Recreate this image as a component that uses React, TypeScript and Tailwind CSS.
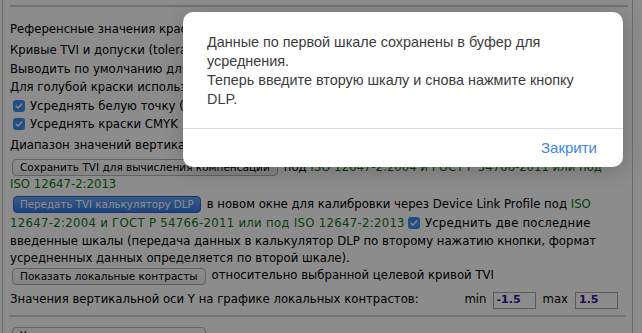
import type { ReactNode } from "react";

function Check() {
  return (
    <span className="mr-[5px] inline-flex h-[12px] w-[12px] shrink-0 items-center justify-center rounded-[3px] bg-[#3d8ef0] align-[-1px]">
      <svg viewBox="0 0 12 12" className="h-[10px] w-[10px]">
        <path d="M2.6 6.2l2.2 2.2 4.6-4.8" fill="none" stroke="white" strokeWidth="1.7" strokeLinecap="round" strokeLinejoin="round" />
      </svg>
    </span>
  );
}

function Btn({ children }: { children: ReactNode }) {
  return (
    <span className="inline-flex h-[17px] shrink-0 items-center whitespace-nowrap rounded-[4px] border border-[#b5b5b5] bg-gradient-to-b from-white to-[#f0f0f0] px-[7px] text-[10.5px] leading-none">
      {children}
    </span>
  );
}

const Iso = ({ children }: { children: ReactNode }) => <span className="text-[#0c7a0c]">{children}</span>;

export default function App() {
  return (
    <div className="relative h-[333px] w-[642px] overflow-hidden bg-white font-['DejaVu_Sans',sans-serif] text-[11.7px] text-black">
      <div className="ml-[2px] h-full w-[631px] whitespace-nowrap border-x border-[#c4c4c4] pl-[7px] pr-[4px]">
        <div className="pt-[5px]">
          <div className="border-t-2 border-[#d0d0d0]" />
        </div>
        <div className="mt-[13px] h-[18px] leading-[18px]">Референсные значения красок</div>
        <div className="mt-[3px] leading-[18.5px]">
          <div>Кривые TVI и допуски (tolerance)</div>
          <div>Выводить по умолчанию для</div>
          <div>Для голубой краски использовать</div>
          <div className="flex items-center pl-[3px]">
            <Check />
            Усреднять белую точку (Paper)
          </div>
          <div className="flex items-center pl-[3px]">
            <Check />
            Усреднять краски CMYK
          </div>
        </div>
        <div className="mt-[2.5px] h-[18px] leading-[18px]">Диапазон значений вертикальной оси</div>
        <div className="mt-[5px] flex h-[17px] items-center gap-[6px] pl-[2px]">
          <Btn>Сохранить TVI для вычисления компенсации</Btn>
          <span>
            под <Iso>ISO 12647-2:2004 и ГОСТ Р 54766-2011 или под</Iso>
          </span>
        </div>
        <div className="h-[16px] leading-[16px]">
          <Iso>ISO 12647-2:2013</Iso>
        </div>
        <div className="mt-[4px] flex h-[17px] items-center gap-[6px] pl-[3px]">
          <span className="inline-flex h-[17px] shrink-0 items-center rounded-[4px] border border-[#2d64c8] bg-gradient-to-b from-[#6aa6f8] to-[#2f7ae6] px-[6px] text-[10.3px] leading-none text-white">
            Передать TVI калькулятору DLP
          </span>
          <span>
            в новом окне для калибровки через Device Link Profile под <Iso>ISO</Iso>
          </span>
        </div>
        <div className="mt-[2px] flex h-[18px] items-center">
          <span className="tracking-[0.3px] text-[#0c7a0c]">12647-2:2004 и ГОСТ Р 54766-2011 или под ISO 12647-2:2013</span>
          <span className="ml-[3px]">
            <Check />
          </span>
          <span className="tracking-[0.2px]">Усреднить две последние</span>
        </div>
        <div className="leading-[16.5px]">
          <div>введенные шкалы (передача данных в калькулятор DLP по второму нажатию кнопки, формат</div>
          <div>усредненных данных определяется по второй шкале).</div>
        </div>
        <div className="mt-[1px] flex h-[18px] items-center gap-[6px] pl-[2px]">
          <Btn>Показать локальные контрасты</Btn>
          <span>относительно выбранной целевой кривой TVI</span>
        </div>
        <div className="mt-[6px] flex h-[18px] items-center">
          <span>Значения вертикальной оси Y на графике локальных контрастов:</span>
          <span className="ml-auto">min</span>
          <span className="ml-[6px] flex h-[17px] w-[43px] items-center border border-[#a8a8a8] px-[3px] text-[11px] font-bold text-[#3a1490]">-1.5</span>
          <span className="ml-[7px]">max</span>
          <span className="ml-[7px] mr-[10px] flex h-[17px] w-[43px] items-center border border-[#a8a8a8] px-[3px] text-[11px] font-bold text-[#3a1490]">1.5</span>
        </div>
        <div className="mt-[6px] mr-[2px] border-t-2 border-[#d0d0d0]" />
        <div className="mt-[10px] pl-[2px]">
          <Btn>Усреднение всех страх замеров</Btn>
        </div>
      </div>

      <div className="absolute inset-0 bg-black/45" />

      <div className="absolute left-[183px] top-[12px] flex h-[155px] w-[440px] flex-col rounded-[10px] bg-white font-['Liberation_Sans',sans-serif] shadow-[0_4px_20px_rgba(0,0,0,0.2)]">
        <div className="flex-1 px-[24px] pt-[21px] text-[14.4px] leading-[19px] text-[#3c3c3c]">
          <p>
            Данные по первой шкале сохранены в буфер для
            <br />
            усреднения.
          </p>
          <p>
            Теперь введите вторую шкалу и снова нажмите кнопку
            <br />
            DLP.
          </p>
        </div>
        <div className="flex h-[39px] items-center justify-end border-t border-[#dcdcdc] pr-[26px] text-[15px] text-[#3d85f4]">
          Закрити
        </div>
      </div>
    </div>
  );
}
